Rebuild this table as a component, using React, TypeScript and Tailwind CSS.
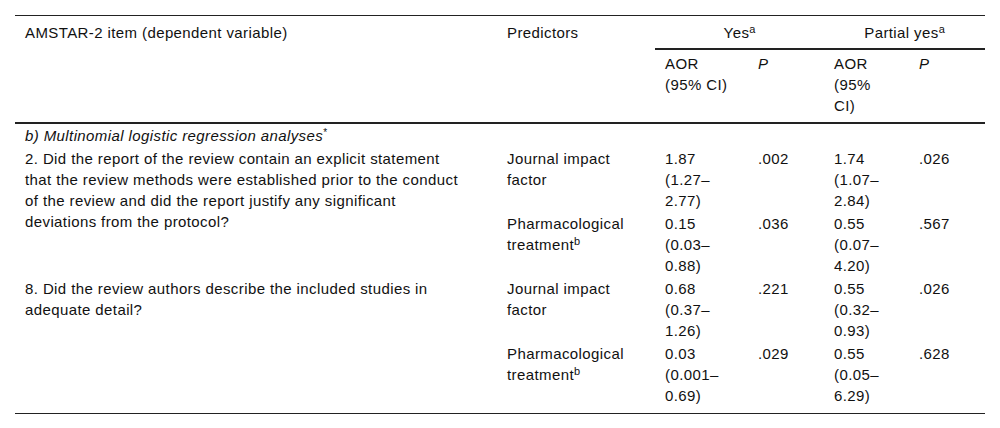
import React from 'react';

type Pred = { name: string; sup?: string; aor1: string; p1: string; aor2: string; p2: string };
type Item = { lines: string[]; preds: Pred[] };

const items: Item[] = [
  {
    lines: [
      '2. Did the report of the review contain an explicit statement',
      'that the review methods were established prior to the conduct',
      'of the review and did the report justify any significant',
      'deviations from the protocol?',
    ],
    preds: [
      { name: 'Journal impact factor', aor1: '1.87 (1.27–2.77)', p1: '.002', aor2: '1.74 (1.07–2.84)', p2: '.026' },
      { name: 'Pharmacological treatment', sup: 'b', aor1: '0.15 (0.03–0.88)', p1: '.036', aor2: '0.55 (0.07–4.20)', p2: '.567' },
    ],
  },
  {
    lines: ['8. Did the review authors describe the included studies in', 'adequate detail?'],
    preds: [
      { name: 'Journal impact factor', aor1: '0.68 (0.37–1.26)', p1: '.221', aor2: '0.55 (0.32–0.93)', p2: '.026' },
      { name: 'Pharmacological treatment', sup: 'b', aor1: '0.03 (0.001–0.69)', p1: '.029', aor2: '0.55 (0.05–6.29)', p2: '.628' },
    ],
  },
];

const Sup: React.FC<{ children: React.ReactNode }> = ({ children }) => (
  <sup className="text-[11px] tracking-normal">{children}</sup>
);

export default function App() {
  return (
    <div className="min-h-screen bg-white pt-[15px] px-[15px] font-['Liberation_Sans',Arial,sans-serif] text-[15px] leading-[21px] tracking-[0.4px] text-[#111]">
      <table className="w-[970px] table-fixed border-collapse border-t border-b border-[#222]">
        <colgroup>
          <col className="w-[482px]" />
          <col className="w-[158px]" />
          <col className="w-[93px]" />
          <col className="w-[76px]" />
          <col className="w-[85px]" />
          <col className="w-[76px]" />
        </colgroup>
        <thead>
          <tr>
            <th rowSpan={2} className="align-top text-left font-normal pl-[10px] pt-[6px] border-b-2 border-[#222]">
              AMSTAR-2 item (dependent variable)
            </th>
            <th rowSpan={2} className="align-top text-left font-normal pl-[10px] pt-[6px] border-b-2 border-[#222]">
              Predictors
            </th>
            <th colSpan={2} className="align-top text-center font-normal pt-[6px] pb-[5px] border-b-2 border-[#222]">
              Yes<Sup>a</Sup>
            </th>
            <th colSpan={2} className="align-top text-center font-normal pt-[6px] pb-[5px] border-b-2 border-[#222]">
              Partial yes<Sup>a</Sup>
            </th>
          </tr>
          <tr>
            <th className="align-top text-left font-normal pl-[10px] pr-[17px] pt-[3px] pb-[6px] border-b-2 border-[#222]">
              AOR (95% CI)
            </th>
            <th className="align-top text-left font-normal italic pl-[10px] pt-[3px] pb-[6px] border-b-2 border-[#222]">
              P
            </th>
            <th className="align-top text-left font-normal pl-[10px] pr-[25px] pt-[3px] pb-[6px] border-b-2 border-[#222]">
              AOR (95% CI)
            </th>
            <th className="align-top text-left font-normal italic pl-[10px] pt-[3px] pb-[6px] border-b-2 border-[#222]">
              P
            </th>
          </tr>
        </thead>
        <tbody>
          <tr>
            <td colSpan={6} className="italic pl-[10px] py-px">
              b) Multinomial logistic regression analyses<sup className="text-[10px] not-italic">*</sup>
            </td>
          </tr>
          {items.map((item, i) =>
            item.preds.map((p, j) => {
              const last = i === items.length - 1 && j === item.preds.length - 1;
              const cell = `align-top pl-[10px] pt-px ${last ? 'pb-[7px]' : 'pb-px'}`;
              return (
                <tr key={`${i}-${j}`}>
                  {j === 0 && (
                    <td rowSpan={item.preds.length} className="align-top pl-[10px] py-px whitespace-nowrap">
                      {item.lines.map((l, k) => (
                        <React.Fragment key={k}>
                          {l}
                          {k < item.lines.length - 1 && <br />}
                        </React.Fragment>
                      ))}
                    </td>
                  )}
                  <td className={`${cell} pr-[18px]`}>
                    {p.name}
                    {p.sup && <Sup>{p.sup}</Sup>}
                  </td>
                  <td className={`${cell} pr-[17px]`}>{p.aor1}</td>
                  <td className={cell}>{p.p1}</td>
                  <td className={`${cell} pr-[25px]`}>{p.aor2}</td>
                  <td className={cell}>{p.p2}</td>
                </tr>
              );
            })
          )}
        </tbody>
      </table>
    </div>
  );
}
